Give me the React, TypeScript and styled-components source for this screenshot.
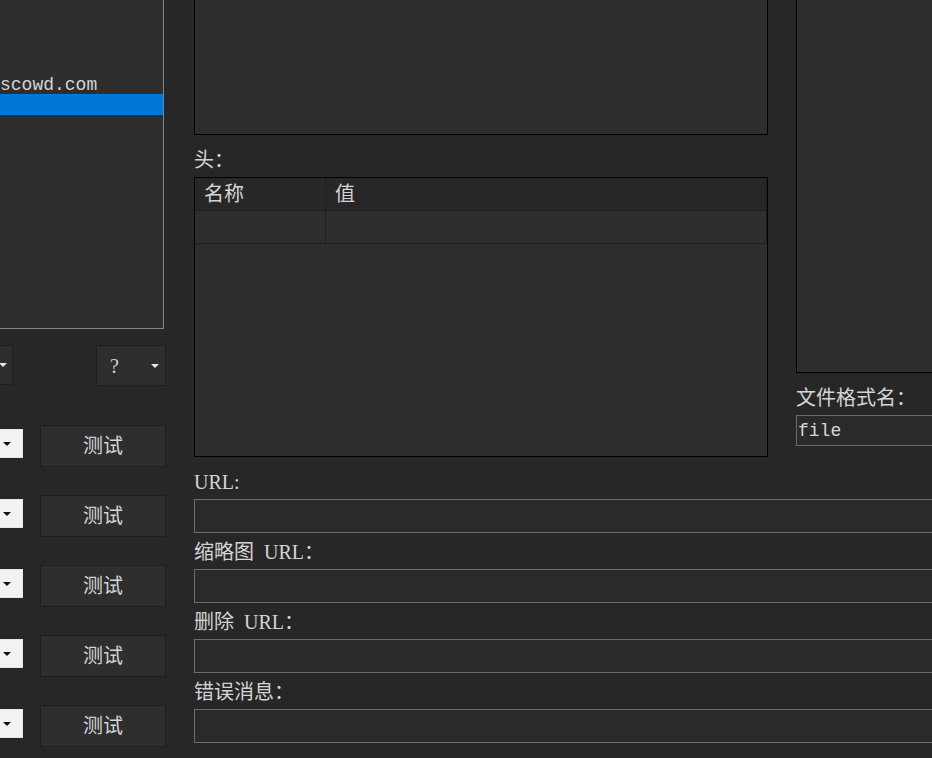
import React from "react";
import styled, { createGlobalStyle } from "styled-components";

const GlobalStyle = createGlobalStyle`
  html, body {
    margin: 0;
    padding: 0;
    background: #272727;
    overflow: hidden;
  }
  body {
    width: 932px;
    height: 758px;
    font-family: "Liberation Serif", "Noto Sans CJK SC", serif;
    color: #d4d4d4;
  }
  #root {
    width: 932px;
    height: 758px;
    overflow: hidden;
  }
`;

const Page = styled.div`
  display: flex;
  align-items: flex-start;
  gap: 28px;
  margin: -20px 0 0 -6px;
`;

const LeftCol = styled.div`
  flex: 0 0 172px;
  display: flex;
  flex-direction: column;
`;

const ListBox = styled.div`
  width: 170px;
  height: 349px;
  box-sizing: border-box;
  border: 1px solid #828282;
  background: #2e2e2e;
  padding-top: 8px;
  overflow: hidden;
`;

const ListItem = styled.div<{ $selected?: boolean }>`
  height: 21px;
  box-sizing: border-box;
  padding: 3px 0 0 5px;
  font-family: "Liberation Mono", "Noto Sans CJK SC", monospace;
  font-size: 18px;
  line-height: 18px;
  white-space: nowrap;
  color: ${(p) => (p.$selected ? "#ffffff" : "#d4d4d4")};
  background: ${(p) => (p.$selected ? "#0078d7" : "transparent")};
`;

const DropRow = styled.div`
  display: flex;
  justify-content: space-between;
  align-items: flex-start;
  margin-top: 16px;
  height: 41px;
`;

const Arrow = styled.span<{ $color: string }>`
  display: block;
  width: 0;
  height: 0;
  border-left: 4px solid transparent;
  border-right: 4px solid transparent;
  border-top: 4px solid ${(p) => p.$color};
`;

const DarkCombo = styled.div`
  width: 19px;
  height: 40px;
  box-sizing: border-box;
  background: #2e2e2e;
  border: 1px solid #1f1f1f;
  display: flex;
  align-items: center;
  justify-content: flex-end;
  padding-right: 5px;
`;

const MenuButton = styled.div`
  width: 70px;
  height: 41px;
  box-sizing: border-box;
  background: #2e2e2e;
  border: 1px solid #1f1f1f;
  display: flex;
  align-items: center;
  justify-content: space-between;
  padding: 0 6px 0 13px;
  font-size: 20px;
  line-height: 20px;
`;

const TestList = styled.div`
  display: flex;
  flex-direction: column;
  gap: 28px;
  margin-top: 39px;
`;

const TestRow = styled.div`
  display: flex;
  justify-content: space-between;
  align-items: flex-start;
  height: 42px;
`;

const WhiteCombo = styled.div`
  width: 29px;
  height: 29px;
  margin-top: 4px;
  box-sizing: border-box;
  background: #f2f2f2;
  border: 1px solid #e6e6e6;
  display: flex;
  align-items: center;
  justify-content: flex-end;
  padding-right: 11px;
`;

const TestButton = styled.div`
  width: 126px;
  height: 42px;
  box-sizing: border-box;
  background: #2e2e2e;
  border: 1px solid #1f1f1f;
  display: flex;
  align-items: center;
  justify-content: center;
  font-size: 20px;
  line-height: 20px;
`;

const Main = styled.div`
  flex: 0 0 800px;
  display: flex;
  flex-direction: column;
`;

const TopRow = styled.div`
  display: flex;
  align-items: flex-start;
  gap: 28px;
`;

const MidCol = styled.div`
  flex: 0 0 574px;
  display: flex;
  flex-direction: column;
`;

const RightCol = styled.div`
  flex: 0 0 200px;
  display: flex;
  flex-direction: column;
`;

const Panel = styled.div<{ $h: number }>`
  height: ${(p) => p.$h}px;
  box-sizing: border-box;
  border: 1px solid #000000;
  background: #2e2e2e;
`;

const Label = styled.div<{ $top: number }>`
  font-size: 20px;
  line-height: 20px;
  height: 20px;
  word-spacing: 5px;
  margin-top: ${(p) => p.$top}px;
  margin-bottom: 7px;
  white-space: nowrap;
`;

const HeaderTable = styled.div`
  height: 280px;
  box-sizing: border-box;
  border: 1px solid #000000;
  background: #2e2e2e;
  display: grid;
  grid-template-columns: 131px 441px;
  grid-template-rows: 33px 33px;
  align-content: start;
`;

const Cell = styled.div<{ $head?: boolean }>`
  background: ${(p) => (p.$head ? "#272727" : "#2e2e2e")};
  border-right: 1px solid #1f1f1f;
  border-bottom: 1px solid #1f1f1f;
  display: flex;
  align-items: center;
  padding-left: 9px;
  font-size: 20px;
  line-height: 20px;
  white-space: nowrap;
`;

const TextInput = styled.input<{ $h: number }>`
  display: block;
  width: 100%;
  height: ${(p) => p.$h}px;
  box-sizing: border-box;
  margin: 0;
  border: 1px solid #6b6b6b;
  border-radius: 0;
  outline: none;
  background: #2a2a2a;
  color: #d8d8d8;
  font-family: "Liberation Mono", "Noto Sans CJK SC", monospace;
  font-size: 18px;
  padding: 0 0 0 1px;
`;

const Fields = styled.div`
  display: flex;
  flex-direction: column;
  gap: 9px;
  margin-top: 15px;
`;

const Field = styled.div`
  display: flex;
  flex-direction: column;
`;

const listItems = ["", "", "", "", "scowd.com", ""];
const selectedIndex = 5;
const urlFields = ["URL:", "缩略图 URL：", "删除 URL：", "错误消息："];

export default function App() {
  return (
    <>
      <GlobalStyle />
      <Page>
        <LeftCol>
          <ListBox>
            {listItems.map((t, i) => (
              <ListItem key={i} $selected={i === selectedIndex}>
                {t}
              </ListItem>
            ))}
          </ListBox>
          <DropRow>
            <DarkCombo>
              <Arrow $color="#e8e8e8" />
            </DarkCombo>
            <MenuButton>
              <span>?</span>
              <Arrow $color="#e8e8e8" />
            </MenuButton>
          </DropRow>
          <TestList>
            {[0, 1, 2, 3, 4].map((i) => (
              <TestRow key={i}>
                <WhiteCombo>
                  <Arrow $color="#111111" />
                </WhiteCombo>
                <TestButton>测试</TestButton>
              </TestRow>
            ))}
          </TestList>
        </LeftCol>
        <Main>
          <TopRow>
            <MidCol>
              <Panel $h={155} />
              <Label $top={15}>头：</Label>
              <HeaderTable>
                <Cell $head>名称</Cell>
                <Cell $head>值</Cell>
                <Cell />
                <Cell />
              </HeaderTable>
            </MidCol>
            <RightCol>
              <Panel $h={393} />
              <Label $top={15}>文件格式名：</Label>
              <TextInput $h={31} readOnly defaultValue="file" />
            </RightCol>
          </TopRow>
          <Fields>
            {urlFields.map((f) => (
              <Field key={f}>
                <Label $top={0}>{f}</Label>
                <TextInput $h={34} readOnly defaultValue="" />
              </Field>
            ))}
          </Fields>
        </Main>
      </Page>
    </>
  );
}
